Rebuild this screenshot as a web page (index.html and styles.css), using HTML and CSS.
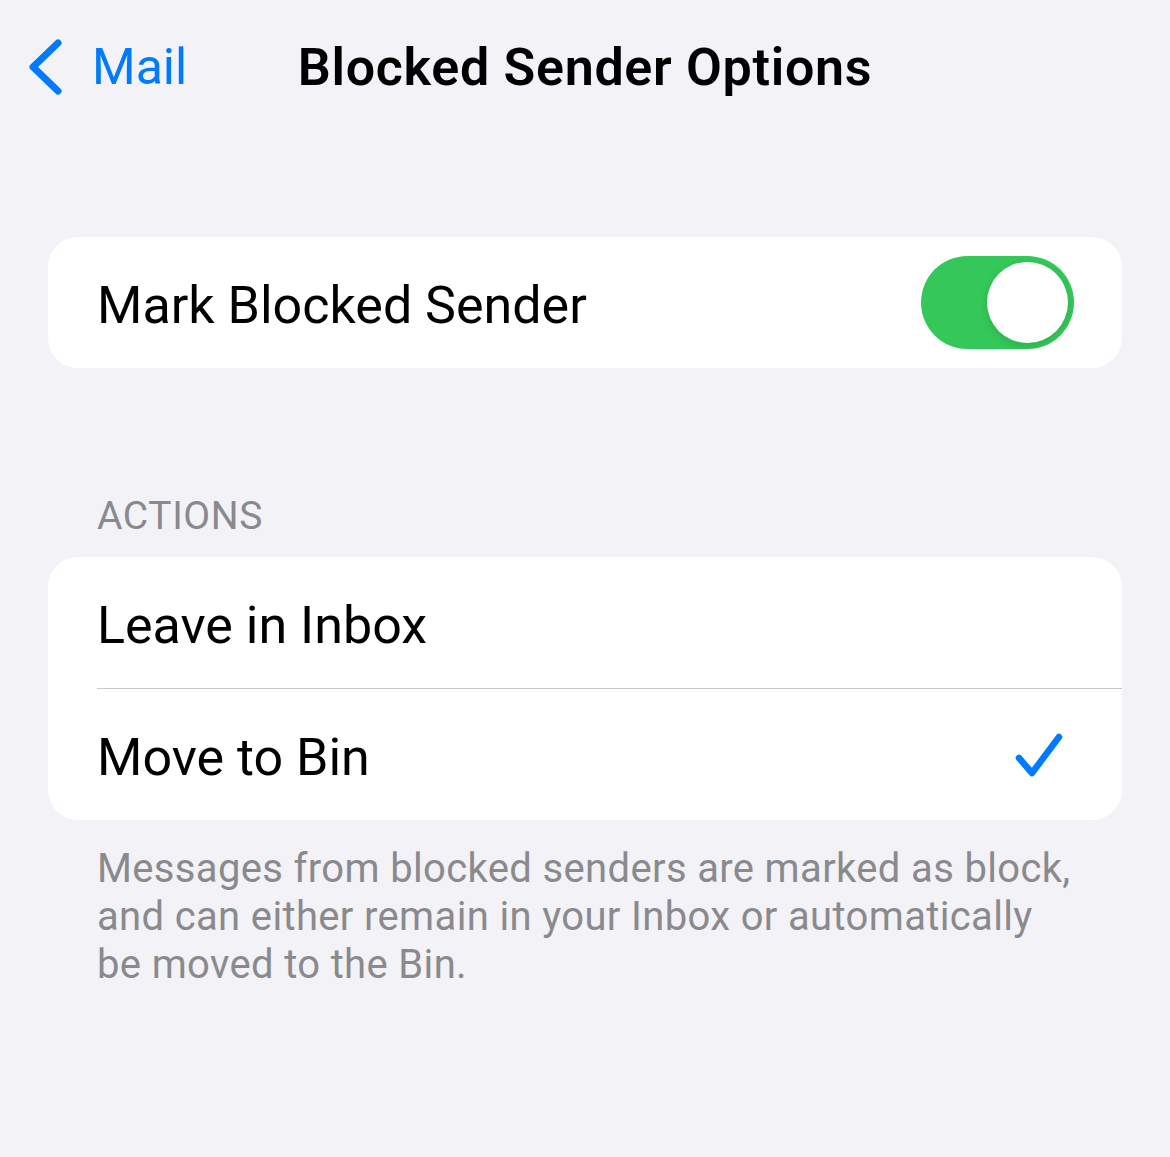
FILE: index.html
```html
<!DOCTYPE html>
<html>
  <head>
    <title>Blocked Sender Options</title>
    <link rel="stylesheet" href="styles.css">
  </head>
  <body>
    <header class="navbar">
      <a class="back" href="#">
        <svg class="chevron" viewBox="0 0 36 56" width="36" height="56">
          <path d="M30 4 L5 28 L30 52" fill="none" stroke="#007aff" stroke-width="7" stroke-linecap="round" stroke-linejoin="round"/>
        </svg>
        <span>Mail</span>
      </a>
      <h1 class="title">Blocked Sender Options</h1>
      <div></div>
    </header>

    <main class="content">
      <div class="group first">
        <div class="row">
          <span class="label">Mark Blocked Sender</span>
          <span class="switch on"><span class="knob"></span></span>
        </div>
      </div>

      <h2 class="section-header">ACTIONS</h2>
      <div class="group">
        <div class="row">
          <span class="label">Leave in Inbox</span>
        </div>
        <div class="row">
          <span class="label">Move to Bin</span>
          <svg class="check" viewBox="0 0 50 46" width="50" height="46">
            <path d="M4 26 L17 41 L44 5" fill="none" stroke="#007aff" stroke-width="6.5" stroke-linecap="round" stroke-linejoin="round"/>
          </svg>
        </div>
      </div>
      <p class="section-footer">Messages from blocked senders are marked as block, and can either remain in your Inbox or automatically be moved to the Bin.</p>
    </main>
  </body>
</html>
```

FILE: styles.css
```css
body {
  margin: 0;
  padding: 0;
  background-color: #f2f2f7;
  font-family: Roboto, Inter, sans-serif;
  color: #000;
}
.navbar {
  height: 134px;
  display: grid;
  grid-template-columns: 1fr auto 1fr;
  align-items: center;
}
.back {
  display: flex;
  align-items: center;
  gap: 28px;
  padding-left: 28px;
  color: #007aff;
  text-decoration: none;
  font-size: 50px;
}
.chevron {
  display: block;
}
.title {
  margin: 0;
  font-size: 52px;
  font-weight: 600;
  letter-spacing: 0.7px;
}
.content {
  padding: 0 48px;
}
.group {
  background: #ffffff;
  border-radius: 30px;
  overflow: hidden;
}
.group.first {
  margin-top: 103px;
}
.row {
  height: 131px;
  margin-left: 49px;
  padding-right: 48px;
  display: flex;
  align-items: center;
  justify-content: space-between;
}
.row + .row {
  border-top: 1px solid #c8c8cc;
}
.label {
  font-size: 52px;
  padding-top: 6px;
}
.switch {
  width: 153px;
  height: 93px;
  border-radius: 47px;
  background: #e9e9eb;
  position: relative;
  box-sizing: border-box;
}
.switch.on {
  background: #34c759;
}
.knob {
  position: absolute;
  top: 6px;
  right: 6px;
  width: 81px;
  height: 81px;
  border-radius: 50%;
  background: #ffffff;
  box-shadow: 0 3px 8px rgba(0, 0, 0, 0.12);
}
.check {
  display: block;
  margin-right: 9px;
}
.section-header {
  margin: 124px 0 17px 49px;
  font-size: 39px;
  font-weight: 400;
  letter-spacing: 0.6px;
  color: #8a8a8e;
  line-height: 48px;
}
.section-footer {
  margin: 25px 47px 0 49px;
  font-size: 40px;
  letter-spacing: 0.35px;
  line-height: 48px;
  color: #8a8a8e;
}
```
